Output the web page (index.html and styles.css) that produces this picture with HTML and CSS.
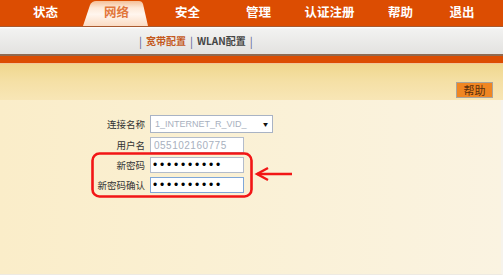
FILE: index.html
```html
<!DOCTYPE html>
<html lang="zh-CN">
<head>
<meta charset="utf-8">
<title>网络 - 宽带配置</title>
<link rel="stylesheet" href="styles.css">
</head>
<body>
<div class="page">
  <nav class="topnav">
    <a class="nav-item">状态</a>
    <a class="nav-item active"><span>网络</span></a>
    <a class="nav-item">安全</a>
    <a class="nav-item">管理</a>
    <a class="nav-item">认证注册</a>
    <a class="nav-item">帮助</a>
    <a class="nav-item last">退出</a>
  </nav>
  <div class="subnav">
    <span class="sep">|</span>
    <a class="sub-item current">宽带配置</a>
    <span class="sep">|</span>
    <a class="sub-item">WLAN配置</a>
    <span class="sep">|</span>
  </div>
  <div class="band"></div>
  <div class="toolbar">
    <button class="help-btn" type="button">帮助</button>
  </div>
  <main class="content">
    <form class="form">
      <label class="label">连接名称</label>
      <span class="select-wrap">
        <select class="select"><option>1_INTERNET_R_VID_</option></select>
      </span>
      <label class="label">用户名</label>
      <input class="input blurred" type="text" value="055102160775">
      <label class="label">新密码</label>
      <input class="input pw" type="password" value="abcdefghij">
      <label class="label">新密码确认</label>
      <input class="input pw focus" type="password" value="abcdefghij">
    </form>
    <svg class="annot" width="220" height="60" viewBox="0 0 220 60" aria-hidden="true">
      <rect x="1.5" y="1.5" width="159" height="43" rx="7" ry="7" fill="none" stroke="#f21616" stroke-width="2.6"/>
      <path d="M166 22 L201 22" stroke="#f21616" stroke-width="2.4" fill="none"/>
      <path d="M177 16 L166 22 L177 28" stroke="#f21616" stroke-width="2.4" fill="none" stroke-linejoin="miter"/>
    </svg>
  </main>
</div>
</body>
</html>
```
FILE: styles.css
```css
* { box-sizing: border-box; }
html, body { margin: 0; padding: 0; }
body {
  width: 503px;
  height: 275px;
  overflow: hidden;
  font-family: "Noto Sans CJK SC", "Liberation Sans", sans-serif;
  background: #faf2dc;
}
.page { display: flex; flex-direction: column; height: 275px; }

.topnav {
  display: flex;
  flex: none;
  height: 27px;
  padding-left: 10px;
  background: #dc4d02;
  border-bottom: 1px solid #a85a30;
}
.nav-item {
  position: relative;
  width: 71px;
  display: flex;
  align-items: center;
  justify-content: center;
  color: #fff;
  font-size: 12.5px;
  font-weight: bold;
  line-height: 1;
  padding-bottom: 1px;
}
.nav-item.last { width: 52px; }
.nav-item.active { color: #e2783c; }
.nav-item.active::before {
  content: "";
  position: absolute;
  left: 0; top: 0;
  width: 71px; height: 26px;
  background: linear-gradient(to bottom, #f3b98e 0%, #fde9d8 30%, #fff6ee 55%, #fbdcc4 100%);
  clip-path: path("M2 26 L9 5 Q11 1 15 1 L58 1 Q61 1 62 4 L67 26 Z");
}
.nav-item.active span { position: relative; }

.subnav {
  flex: none;
  height: 29px;
  display: flex;
  align-items: center;
  gap: 4px;
  padding-left: 139px;
  background: linear-gradient(to bottom, #ffffff 0px, #f2f2f1 2px, #e3e2e0 100%);
  border-bottom: 2px solid #8e6a52;
  font-size: 10px;
  font-weight: bold;
}
.sep { color: #56608e; font-weight: normal; font-size: 11px; }
.sub-item { color: #444; }
.sub-item.current { color: #c4581c; }

.band {
  flex: none;
  height: 8px;
  background: #dc4d02;
  border-bottom: 1px solid #f2c59a;
}
.toolbar {
  flex: none;
  height: 36px;
  display: flex;
  justify-content: flex-end;
  align-items: flex-end;
  padding: 0 10px 2px 0;
  background: linear-gradient(to bottom, #f0d78e 0%, #f5e0a6 50%, #f8e6b6 100%);
}
.help-btn {
  width: 37px;
  height: 16px;
  padding: 0;
  background: #f08622;
  border: 1px solid #a8a49c;
  color: #5a2e0c;
  font-family: inherit;
  font-size: 11px;
  line-height: 14px;
}

.content {
  position: relative;
  flex: 1;
  padding-top: 15px;
  background: linear-gradient(to right, #faedc9 0%, #faf0d3 40%, #faf3e1 100%);
  border-right: 2px solid #f6f3ec;
  border-bottom: 1px solid #eeeae2;
}
.form {
  display: grid;
  grid-template-columns: 85px auto;
  grid-template-rows: 18px 16px 16px 16px;
  column-gap: 5px;
  row-gap: 4px;
  padding-left: 60px;
  align-items: center;
  justify-items: start;
}
.label {
  justify-self: end;
  font-size: 9.5px;
  color: #333;
  line-height: 14px;
}
.select-wrap { position: relative; display: flex; height: 18px; align-items: center; }
.select-wrap::after {
  content: "▼";
  position: absolute;
  right: 5px; top: 6px;
  font-size: 5px;
  line-height: 6px;
  color: #111;
  pointer-events: none;
}
.select {
  appearance: none;
  -webkit-appearance: none;
  width: 123px;
  height: 18px;
  border: 1px solid #a9b3c4;
  background: #fff;
  font-family: "Liberation Sans", sans-serif;
  font-size: 9px;
  color: #a8b0be;
  padding: 0 4px;
  border-radius: 0;
  margin: 0;
}
.input {
  width: 94px;
  height: 16px;
  margin: 0;
  border: 1px solid #b3bccb;
  background: #fff;
  padding: 0 3px;
  font-family: "Liberation Sans", sans-serif;
  outline: none;
}
.blurred { font-size: 10px; color: #a8b0be; letter-spacing: 0.5px; }
.pw { font-size: 12px; letter-spacing: 2.8px; color: #000; padding-left: 2px; }
.input.focus { border-color: #7fa7d8; }

.annot {
  position: absolute;
  left: 91px;
  top: 52px;
}
```
